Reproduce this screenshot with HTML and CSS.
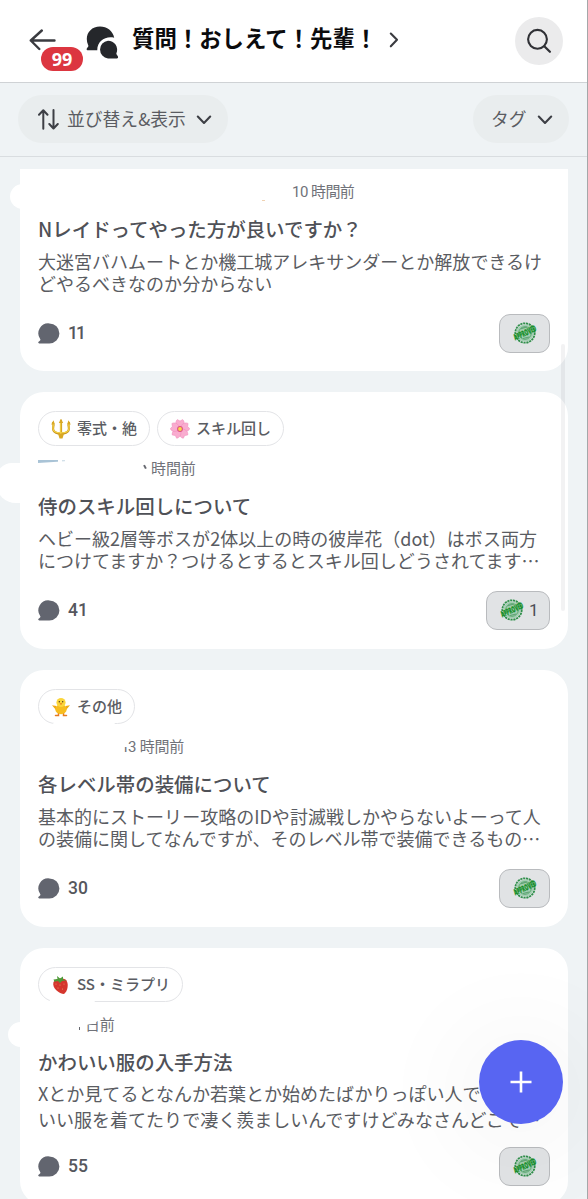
FILE: index.html
```html
<!DOCTYPE html>
<html lang="ja">
<head>
<meta charset="utf-8">
<title>質問！おしえて！先輩！</title>
<link rel="stylesheet" href="styles.css">
</head>
<body>
<svg class="defs" width="0" height="0" aria-hidden="true">
  <symbol id="bubble" viewBox="0 0 22 21"><path d="M11.400.4a10 10 0 1 1 0 20H1.200c-1 0-1.300-1-.6-1.600l1.500-1.400c.4-.4.4-.7.2-1.200A10 10 0 0 1 11.400.4z" fill="#62656f"/></symbol>
  <symbol id="chev" viewBox="0 0 16 10"><path d="M1.800 1.600 8 7.900l6.200-6.300" fill="none" stroke="#3d3f45" stroke-width="2.100" stroke-linecap="round" stroke-linejoin="round"/></symbol>
  <symbol id="stamp" viewBox="0 0 24 22">
    <circle cx="12" cy="11" r="8.600" fill="#a3ceb2"/>
    <circle cx="12" cy="11" r="9.700" fill="none" stroke="#2f8f4a" stroke-width="1.800" stroke-dasharray="2.200 .7"/>
    <circle cx="12" cy="11" r="6.300" fill="none" stroke="#5aa870" stroke-width="1"/>
    <path d="M8 6.600 14 5M10 16.500l6-1.500" stroke="#5fa374" stroke-width="1.200"/>
  </symbol>
</svg>
<div class="app">
  <header class="header">
    <div class="back">
      <svg width="27" height="23" viewBox="0 0 27 23"><path d="M25.500 11.500H1.800M12.800 1.500 1.800 11.500l8.500 8.500" fill="none" stroke="#3a3b40" stroke-width="2.400" stroke-linecap="round" stroke-linejoin="round"/></svg>
      <span class="badge">99</span>
    </div>
    <svg class="forum" width="32" height="33" viewBox="0 0 32 33"><path d="M14 .5C21 .5 27 5 28.200 11.800 19.500 9.500 11 15.500 11.300 24.300H2C.5 24.300.2 22.800 1.300 21.800c1.200-1.100 1.300-1.600.8-2.700C-2 9.500 4 .5 14 .5z" fill="#25272b"/><path d="M22 14.700a9 9 0 0 1 8.500 12.300c-.3.900-.2 1.300.5 2.100l.8 1.100c.7 1 .2 2.200-1 2.200H22a8.900 8.900 0 0 1 0-17.700z" fill="#25272b"/></svg>
    <h1 class="heading">質問！おしえて！先輩！</h1>
    <svg class="go" width="10" height="16" viewBox="0 0 10 16"><path d="m1.800 1.500 6.200 6.300-6.200 6.500" fill="none" stroke="#3a3b40" stroke-width="2.100" stroke-linecap="round" stroke-linejoin="round"/></svg>
    <div class="search"><svg width="26" height="26" viewBox="0 0 26 26"><circle cx="11.500" cy="11.300" r="9.400" fill="none" stroke="#303136" stroke-width="2.100"/><path d="m18.300 18.200 5.600 5.500" stroke="#303136" stroke-width="2.300" stroke-linecap="round"/></svg></div>
  </header>
  <div class="filters">
    <div class="pill sort">
      <svg width="21" height="21" viewBox="0 0 21 21"><path d="M5.300 19.800V1.500M1 5.800l4.300-4.500 4.200 4.500M15.500 1v18.300M11.300 15l4.200 4.500 4.300-4.500" fill="none" stroke="#3d3f45" stroke-width="2" stroke-linecap="round" stroke-linejoin="round"/></svg>
      <span class="sort-label">並び替え&amp;表示</span>
      <svg class="chev" width="16" height="10"><use href="#chev"/></svg>
    </div>
    <div class="pill tag-filter"><span>タグ</span><svg class="chev" width="16" height="10"><use href="#chev"/></svg></div>
  </div>
  <main class="list">
    <article class="card first">
      <i class="smudge s1"></i>
      <div class="meta m1"><i class="speck"></i>10 時間前</div>
      <h2>Nレイドってやった方が良いですか？</h2>
      <p>大迷宮バハムートとか機工城アレキサンダーとか解放できるけ<br>どやるべきなのか分からない</p>
      <footer><svg width="22" height="21"><use href="#bubble"/></svg><b class="ones">11</b><span class="react"><svg class="stamp" width="26" height="24" viewBox="-1 -1 26 24"><use href="#stamp" width="24" height="22"/><text x="12" y="13.800" transform="rotate(-25 12 11)" text-anchor="middle" textLength="24" lengthAdjust="spacingAndGlyphs" class="stamp-text">APPROVED</text></svg></span></footer>
    </article>
    <article class="card">
      <i class="smudge s2"></i>
      <div class="tags">
        <span class="tag"><svg width="20" height="20" viewBox="0 0 20 20"><g fill="none" stroke="#c9971d" stroke-width="2.200" stroke-linecap="round" stroke-linejoin="round"><path d="M10 1.500v16M2 4c1.500 3-1 4.500.5 7.500 1 2 3.500 3 7.500 3s6.500-1 7.500-3c1.500-3-1-4.500.5-7.500"/></g><g fill="none" stroke="#f7d548" stroke-width="1.100" stroke-linecap="round"><path d="M9.700 2v13M1.900 4.500c1.200 2.500-1 4 .6 6.700 1.200 2 3.500 2.700 7.500 2.700s6.300-.7 7.500-2.700c1.600-2.700-.6-4.200.6-6.700"/></g><path d="m10 0 2.200 4H7.800zM2.500 1.300l1.300 4-3.600.2zM17.500 1.300l-1.300 4 3.600.2zM7 14.800h6L11.500 19.500h-3z" fill="#d9a824"/></svg>零式・絶</span>
        <span class="tag"><svg width="20" height="20" viewBox="0 0 20 20"><g fill="#f9accf" stroke="#ee8bb9" stroke-width=".5"><path id="petal" d="M10 10C5 7.500 5 2.500 7.300.6L10 2 12.700.6C15 2.500 15 7.500 10 10z"/><use href="#petal" transform="rotate(72 10 10)"/><use href="#petal" transform="rotate(144 10 10)"/><use href="#petal" transform="rotate(216 10 10)"/><use href="#petal" transform="rotate(288 10 10)"/></g><circle cx="10" cy="10" r="2.900" fill="#dc5080"/><circle cx="10" cy="10" r="1.900" fill="#f8d94b"/></svg>スキル回し</span>
      </div>
      <div class="meta m2"><i class="avatar-edge"></i><i class="tick"></i>時間前</div>
      <h2>侍のスキル回しについて</h2>
      <p class="p2">ヘビー級2層等ボスが2体以上の時の彼岸花（dot）はボス両方<br>につけてますか？つけるとするとスキル回しどうされてます…</p>
      <footer><svg width="22" height="21"><use href="#bubble"/></svg><b>41</b><span class="react counted"><svg class="stamp" width="26" height="24" viewBox="-1 -1 26 24"><use href="#stamp" width="24" height="22"/><text x="12" y="13.800" transform="rotate(-25 12 11)" text-anchor="middle" textLength="24" lengthAdjust="spacingAndGlyphs" class="stamp-text">APPROVED</text></svg><em>1</em></span></footer>
    </article>
    <article class="card">
      <div class="tags">
        <span class="tag erased e3"><svg width="20" height="20" viewBox="0 0 20 20"><path d="M5.500 9 1 8.300l3.800 4.500zM14.500 9l4.500-.7-3.800 4.500z" fill="#efaa16"/><path d="M7.500 15.500v3H4.500M12.500 15.500v3h3" fill="none" stroke="#e67b20" stroke-width="1.500" stroke-linecap="round"/><ellipse cx="10" cy="12.300" rx="5.700" ry="5" fill="#f7bd1f"/><circle cx="10" cy="5.500" r="4.600" fill="#fbd63b"/><circle cx="8.300" cy="4.800" r=".7" fill="#49351c"/><circle cx="11.700" cy="4.800" r=".7" fill="#49351c"/><path d="M8.500 6.300h3L10 8z" fill="#e97a1c"/></svg>その他</span>
      </div>
      <div class="meta m3"><span class="cut-one">1</span>3 時間前</div>
      <h2>各レベル帯の装備について</h2>
      <p>基本的にストーリー攻略のIDや討滅戦しかやらないよーって人<br>の装備に関してなんですが、そのレベル帯で装備できるもの…</p>
      <footer><svg width="22" height="21"><use href="#bubble"/></svg><b>30</b><span class="react"><svg class="stamp" width="26" height="24" viewBox="-1 -1 26 24"><use href="#stamp" width="24" height="22"/><text x="12" y="13.800" transform="rotate(-25 12 11)" text-anchor="middle" textLength="24" lengthAdjust="spacingAndGlyphs" class="stamp-text">APPROVED</text></svg></span></footer>
    </article>
    <article class="card last">
      <i class="smudge s4"></i>
      <div class="tags">
        <span class="tag erased e4"><svg width="20" height="20" viewBox="0 0 20 20"><path d="M2.500 7C5 3 13 2.500 15.500 5.500c2.500 4 1 11-2.500 13.500C8.500 18.800.5 13.500 2.500 7z" fill="#d5362d"/><path d="m2.500 4.500 4-.5L6 1l3 2.500L12 1.500 12 4.500l3.500.8-4.500.7-2 2-2-2-3.500.8z" fill="#4d9b38"/><g fill="#f0a070"><circle cx="5" cy="9" r=".5"/><circle cx="9" cy="10" r=".5"/><circle cx="13" cy="9" r=".5"/><circle cx="7" cy="13" r=".5"/><circle cx="11.500" cy="14" r=".5"/></g></svg>SS・ミラプリ</span>
      </div>
      <div class="meta m4"><i class="dot"></i><span class="day">日</span>前</div>
      <h2>かわいい服の入手方法</h2>
      <p>Xとか見てるとなんか若葉とか始めたばかりっぽい人でもかわ<br>いい服を着てたりで凄く羨ましいんですけどみなさんどこで…</p>
      <footer><svg width="22" height="21"><use href="#bubble"/></svg><b>55</b><span class="react"><svg class="stamp" width="26" height="24" viewBox="-1 -1 26 24"><use href="#stamp" width="24" height="22"/><text x="12" y="13.800" transform="rotate(-25 12 11)" text-anchor="middle" textLength="24" lengthAdjust="spacingAndGlyphs" class="stamp-text">APPROVED</text></svg></span></footer>
    </article>
  </main>
  <div class="scrollbar"></div>
  <div class="fab"><svg width="22" height="22" viewBox="0 0 22 22"><path d="M11 .5v21M.5 11h21" stroke="#fff" stroke-width="2.600"/></svg></div>
  <div class="edge"></div>
</div>
</body>
</html>
```

FILE: styles.css
```css
* { box-sizing: border-box; }
body { margin: 0; background: #eff3f5; font-family: "Noto Sans CJK JP", sans-serif; color: #5a5c62; }
.defs { position: absolute; }
.app { position: relative; width: 588px; height: 1199px; overflow: hidden; }
svg { flex: none; display: block; }

.header { display: flex; align-items: center; height: 83px; padding: 0 25px 1px 29px; background: #fff; border-bottom: 1px solid #cfd2d5; }
.back { position: relative; width: 27px; }
.badge { position: absolute; left: 12px; top: 18px; width: 42px; height: 24px; border-radius: 12px; background: #dc3640; color: #fff; font: 700 18px/24px "Noto Sans", sans-serif; text-align: center; }
.forum { margin: 3px 0 0 30px; }
.heading { margin: -7px 0 0 14px; font-size: 22.400px; line-height: 32px; font-weight: 700; color: #0b0b0d; width: 243px; white-space: nowrap; }
.go { margin: -2px 0 0 14px; }
.search { margin-left: auto; width: 48px; height: 48px; border-radius: 50%; background: #ebebec; display: flex; align-items: center; justify-content: center; }

.filters { display: flex; justify-content: space-between; height: 74px; padding: 12px 19px 0 18px; border-bottom: 1px solid #d9dde0; }
.pill { display: flex; align-items: center; height: 48px; border-radius: 24px; background: #e9edee; font-size: 17.800px; line-height: 26px; white-space: nowrap; }
.sort { width: 210px; padding-left: 20px; }
.sort-label { width: 129px; margin: -3px 0 0 8px; }
.tag-filter { width: 96px; padding-left: 18px; gap: 10px; }
.tag-filter span { margin-top: -3px; }
.chev { margin-top: 2px; }

.list { display: flex; flex-direction: column; gap: 21px; padding: 12px 20px 0; }
.card { position: relative; flex: none; height: 257px; padding: 19px 18px 0; border-radius: 24px; background: #fff; }
.first { height: 202px; padding-top: 14px; border-radius: 0 0 24px 24px; }
.tags { display: flex; gap: 7px; height: 35px; margin-bottom: 14px; }
.tag { position: relative; display: flex; align-items: center; gap: 6px; padding: 0 12px 2px 12px; border: 1px solid #e3e4e7; border-radius: 18px; font-size: 15px; line-height: 22px; font-weight: 500; white-space: nowrap; }
.tag svg { margin-top: 3px; }
.erased::after { content: ""; position: absolute; background: #fff; border-radius: 8px 8px 0 0; height: 5px; bottom: -2px; }
.e3::after { left: 14px; width: 62px; }
.e4::after { left: 10px; width: 46px; }

.meta { display: flex; height: 18px; font-family: Roboto, "Noto Sans CJK JP", sans-serif; font-size: 15px; line-height: 19px; color: #707279; white-space: pre; position: relative; }
.m1 { padding-left: 254px; letter-spacing: -.55px; }
.m2 { padding-left: 113px; letter-spacing: -.1px; }
.m3 { padding-left: 86px; letter-spacing: -.2px; }
.m4 { padding-left: 47px; letter-spacing: -.3px; }
.speck { position: absolute; left: 224px; top: 17px; width: 3px; height: 1px; background: #f0d2b2; }
.avatar-edge { position: absolute; left: 0; top: 0; width: 27px; height: 3px; background: linear-gradient(90deg, #a9c3d6 0 75%, #fff 75% 88%, #d2e0e9 88%); clip-path: polygon(0 0, 100% 0, 100% 40%, 0 100%); }
.tick { position: absolute; left: 106px; top: 5px; width: 1.500px; height: 4px; background: #66686f; transform: rotate(-28deg); }
.cut-one { width: 5px; margin-right: -1px; clip-path: inset(9px 0 0 0); text-indent: -3px; }
.dot { position: absolute; left: 41px; top: 11px; width: 1px; height: 3px; background: #66686f; }
.day { clip-path: polygon(0 9px, 50% 8px, 100% 4px, 100% 100%, 0 100%); }
.card h2 { margin: 17px 0 0; height: 24px; font-size: 19.450px; line-height: 22px; font-weight: 500; color: #4f5157; white-space: nowrap; }
.card p { margin: 8px 0 0; height: 44px; font-size: 18.020px; line-height: 22px; white-space: nowrap; }
.last p { margin-top: 5px; line-height: 26px; height: 52px; }
.card footer { display: flex; align-items: center; height: 38px; margin-top: 20px; }
.last footer { margin-top: 15px; }
.card footer b { margin-left: 8px; font: 500 17.500px/24px Roboto, sans-serif; color: #55575d; }
.card footer .ones { letter-spacing: -2px; }
.react { margin-left: auto; display: flex; align-items: center; gap: 5px; height: 39px; padding: 0 11.500px; border: 1px solid #b9bbbe; border-radius: 11px; background: #e1e3e5; }
.react em { font: 400 17px/24px Roboto, sans-serif; color: #4c4e54; margin-left: -1px; margin-right: -1px; }
.stamp { overflow: visible; }
.stamp-text { font: 800 8.500px "Open Sans", sans-serif; fill: #169029; stroke: #169029; stroke-width: .2px; }

.smudge { position: absolute; background: #fff; }
.s1 { left: -10px; top: 15px; width: 30px; height: 25px; border-radius: 13px; }
.s2 { left: -24px; top: 71px; width: 40px; height: 40px; border-radius: 16px 0 0 20px; }
.s4 { left: -12px; top: 74px; width: 30px; height: 25px; border-radius: 13px; }
.scrollbar { position: absolute; left: 561px; top: 344px; width: 4px; height: 267px; border-radius: 2px; background: rgba(70, 75, 80, .07); }
.fab { position: absolute; left: 479px; top: 1040px; width: 84px; height: 84px; border-radius: 50%; background: #5865f2; display: flex; align-items: center; justify-content: center; box-shadow: 0 10px 100px 30px rgba(0, 0, 0, .035); }
.edge { position: absolute; right: 0; top: 0; width: 1px; height: 100%; background: #a5a7a9; }
```
